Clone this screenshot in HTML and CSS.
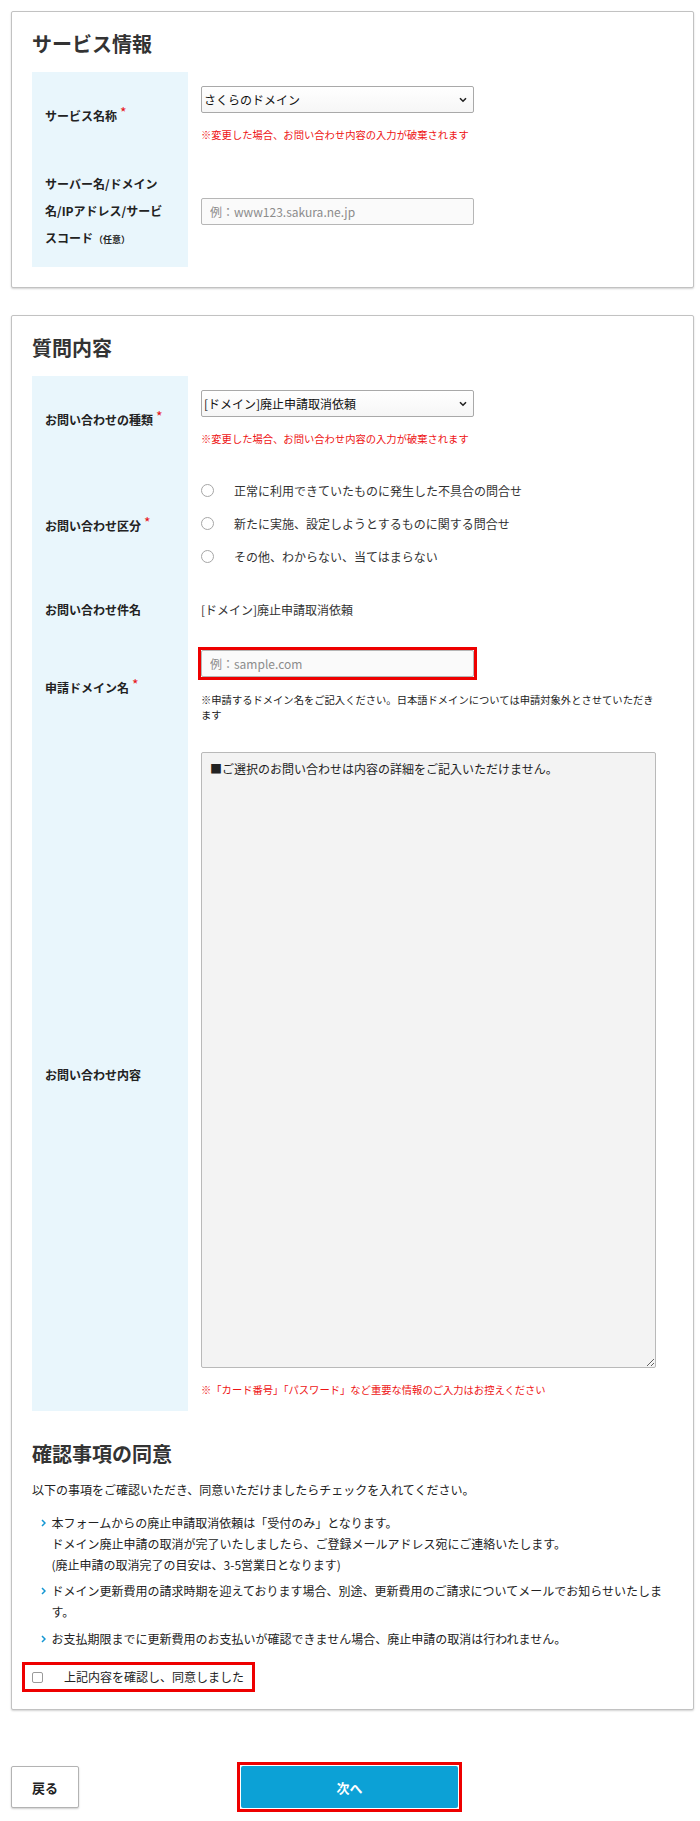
FILE: index.html
```html
<!DOCTYPE html>
<html lang="ja">
<head>
<meta charset="utf-8">
<title>お問い合わせ</title>
<link rel="stylesheet" href="styles.css">
</head>
<body>
<div class="page">
  <section class="card">
    <h2 class="card-title">サービス情報</h2>
    <div class="row">
      <div class="lbl"><span>サービス名称<span class="req">*</span></span></div>
      <div class="fld">
        <div class="select"><span>さくらのドメイン</span><svg class="chev" width="8" height="6" viewBox="0 0 8 6"><path d="M1 1.2 L4 4.2 L7 1.2" fill="none" stroke="#222" stroke-width="1.6"/></svg></div>
        <p class="warn">※変更した場合、お問い合わせ内容の入力が破棄されます</p>
      </div>
    </div>
    <div class="row">
      <div class="lbl lbl-multi"><span>サーバー名/ドメイン<br>名/IPアドレス/サービ<br>スコード<small class="opt">（任意）</small></span></div>
      <div class="fld fld-center">
        <input class="text-input" type="text" placeholder="例：www123.sakura.ne.jp">
      </div>
    </div>
  </section>

  <section class="card card-last">
    <h2 class="card-title">質問内容</h2>
    <div class="row">
      <div class="lbl"><span>お問い合わせの種類<span class="req">*</span></span></div>
      <div class="fld">
        <div class="select"><span>[ドメイン]廃止申請取消依頼</span><svg class="chev" width="8" height="6" viewBox="0 0 8 6"><path d="M1 1.2 L4 4.2 L7 1.2" fill="none" stroke="#222" stroke-width="1.6"/></svg></div>
        <p class="warn">※変更した場合、お問い合わせ内容の入力が破棄されます</p>
      </div>
    </div>
    <div class="row">
      <div class="lbl"><span>お問い合わせ区分<span class="req">*</span></span></div>
      <div class="fld">
        <div class="radio-row"><span class="radio"></span><span>正常に利用できていたものに発生した不具合の問合せ</span></div>
        <div class="radio-row"><span class="radio"></span><span>新たに実施、設定しようとするものに関する問合せ</span></div>
        <div class="radio-row"><span class="radio"></span><span>その他、わからない、当てはまらない</span></div>
      </div>
    </div>
    <div class="row">
      <div class="lbl"><span>お問い合わせ件名</span></div>
      <div class="fld">
        <p class="plain">[ドメイン]廃止申請取消依頼</p>
      </div>
    </div>
    <div class="row">
      <div class="lbl"><span>申請ドメイン名<span class="req">*</span></span></div>
      <div class="fld">
        <div class="hl hl-input"><input class="text-input" type="text" placeholder="例：sample.com"></div>
        <p class="note">※申請するドメイン名をご記入ください。日本語ドメインについては申請対象外とさせていただきます</p>
      </div>
    </div>
    <div class="row">
      <div class="lbl"><span>お問い合わせ内容</span></div>
      <div class="fld">
        <textarea class="textarea" readonly>■ご選択のお問い合わせは内容の詳細をご記入いただけません。</textarea>
        <p class="warn">※「カード番号」「パスワード」など重要な情報のご入力はお控えください</p>
      </div>
    </div>

    <h2 class="card-title agree-title">確認事項の同意</h2>
    <p class="intro">以下の事項をご確認いただき、同意いただけましたらチェックを入れてください。</p>
    <ul class="list">
      <li><span class="bullet"><svg width="5" height="8" viewBox="0 0 5 8"><path d="M1 1 L4 4 L1 7" fill="none" stroke="#1597d3" stroke-width="1.5"/></svg></span><span>本フォームからの廃止申請取消依頼は「受付のみ」となります。<br>ドメイン廃止申請の取消が完了いたしましたら、ご登録メールアドレス宛にご連絡いたします。<br>(廃止申請の取消完了の目安は、3-5営業日となります)</span></li>
      <li><span class="bullet"><svg width="5" height="8" viewBox="0 0 5 8"><path d="M1 1 L4 4 L1 7" fill="none" stroke="#1597d3" stroke-width="1.5"/></svg></span><span>ドメイン更新費用の請求時期を迎えております場合、別途、更新費用のご請求についてメールでお知らせいたします。</span></li>
      <li><span class="bullet"><svg width="5" height="8" viewBox="0 0 5 8"><path d="M1 1 L4 4 L1 7" fill="none" stroke="#1597d3" stroke-width="1.5"/></svg></span><span>お支払期限までに更新費用のお支払いが確認できません場合、廃止申請の取消は行われません。</span></li>
    </ul>
    <div class="hl hl-check"><span class="checkbox"></span><span>上記内容を確認し、同意しました</span></div>
  </section>

  <div class="actions">
    <button class="btn-back" type="button">戻る</button>
    <div class="hl hl-btn"><button class="btn-next" type="button">次へ</button></div>
  </div>
</div>
</body>
</html>
```

FILE: styles.css
```css
* { box-sizing: border-box; }
html, body { margin: 0; padding: 0; background: #fff; }
body {
  font-family: "Noto Sans CJK JP", "Noto Sans", sans-serif;
  font-size: 12px;
  line-height: 18px;
  color: #222;
}
p { margin: 0; }

.page { padding: 11px 6px 7px 11px; }

.card {
  background: #fff;
  border: 1px solid #c2c2c2;
  border-radius: 2px;
  box-shadow: 0 1px 2px rgba(0, 0, 0, 0.18);
  padding: 18px 20px 20px;
}
.card + .card { margin-top: 27px; }
.card-last { padding-bottom: 17px; }

.card-title {
  margin: 0 0 14px;
  font-size: 20px;
  line-height: 28px;
  font-weight: 700;
  color: #333;
}

.row { display: flex; }
.lbl {
  width: 156px;
  flex: none;
  background: #e9f6fc;
  padding: 14px 8px 14px 13px;
  display: flex;
  align-items: center;
  font-weight: 700;
  line-height: 18px;
  white-space: nowrap;
  color: #222;
}
.lbl-multi { line-height: 27px; }
.opt { font-size: 9px; margin-left: 1px; }
.req {
  color: #e8141a;
  font-size: 14px;
  margin-left: 3px;
  vertical-align: 3px;
  font-weight: 400;
}

.fld {
  width: 469px;
  padding: 14px 0 14px 13px;
  display: flex;
  flex-direction: column;
}
.fld-center { justify-content: center; }

.select {
  width: 273px;
  height: 27px;
  border: 1px solid #a9a9a9;
  border-radius: 2px;
  background: linear-gradient(#ffffff, #f6f6f6);
  display: flex;
  align-items: center;
  justify-content: space-between;
  padding: 0 6px 0 2px;
  color: #111;
}
.chev { flex: none; }

.warn {
  margin-top: 14px;
  font-size: 10.3px;
  line-height: 15px;
  color: #ee1515;
  white-space: nowrap;
}
.note {
  margin-top: 12px;
  margin-bottom: 2px;
  font-size: 10.3px;
  line-height: 15px;
  color: #222;
  width: 456px;
}

.text-input {
  width: 273px;
  height: 27px;
  border: 1px solid #b6b6b6;
  border-radius: 2px;
  background: #fafafa;
  padding: 0 8px;
  font: inherit;
  font-size: 12px;
  color: #222;
  outline: none;
}
.text-input::placeholder { color: #8c8c8c; }

.radio-row {
  height: 33px;
  display: flex;
  align-items: center;
  color: #333;
}
.radio {
  width: 13px;
  height: 13px;
  border: 1px solid #a6a6a6;
  border-radius: 50%;
  background: #fff;
  margin-right: 20px;
  flex: none;
}

.plain { line-height: 18px; color: #333; }

.hl { border: 3px solid #ee0000; }
.hl-input { align-self: flex-start; margin-left: -3px; }
.hl-input .text-input { display: block; }

.textarea {
  display: block;
  width: 455px;
  height: 616px;
  border: 1px solid #b9b9b9;
  border-radius: 2px;
  background: #f3f3f3;
  padding: 7px 8px;
  font: inherit;
  font-size: 12px;
  line-height: 18px;
  color: #222;
  resize: both;
  outline: none;
}

.agree-title { margin-top: 29px; margin-bottom: 12px; }
.intro { line-height: 20px; }

.list {
  list-style: none;
  margin: 12px 0 0;
  padding: 0;
  line-height: 21px;
}
.list li { display: flex; }
.list li + li { margin-top: 5px; }
.list li:last-child { margin-top: 6px; }
.bullet {
  width: 19.5px;
  height: 21px;
  flex: none;
  padding-left: 8.5px;
  display: flex;
  align-items: center;
}

.hl-check {
  margin: 13px 0 0 -10px;
  width: 233px;
  height: 30px;
  display: flex;
  align-items: center;
  padding-left: 7px;
  color: #222;
}
.checkbox {
  width: 11px;
  height: 11px;
  border: 1px solid #9a9a9a;
  border-radius: 2px;
  background: #fff;
  margin-right: 21px;
  flex: none;
}

.actions {
  margin-top: 52px;
  height: 50px;
  display: flex;
  align-items: center;
}
.btn-back {
  width: 68px;
  height: 42px;
  background: #fff;
  border: 1px solid #b3b3b3;
  border-radius: 2px;
  box-shadow: 0 1px 2px rgba(0, 0, 0, 0.2);
  font-family: inherit;
  font-size: 13px;
  font-weight: 700;
  color: #222;
  padding: 0;
}
.hl-btn { margin-left: 158px; padding: 1px; }
.btn-next {
  display: block;
  width: 217px;
  height: 42px;
  background: #0ca1d6;
  border: none;
  border-radius: 2px;
  font-family: inherit;
  font-size: 13px;
  font-weight: 700;
  color: #fff;
  padding: 0;
}
```
